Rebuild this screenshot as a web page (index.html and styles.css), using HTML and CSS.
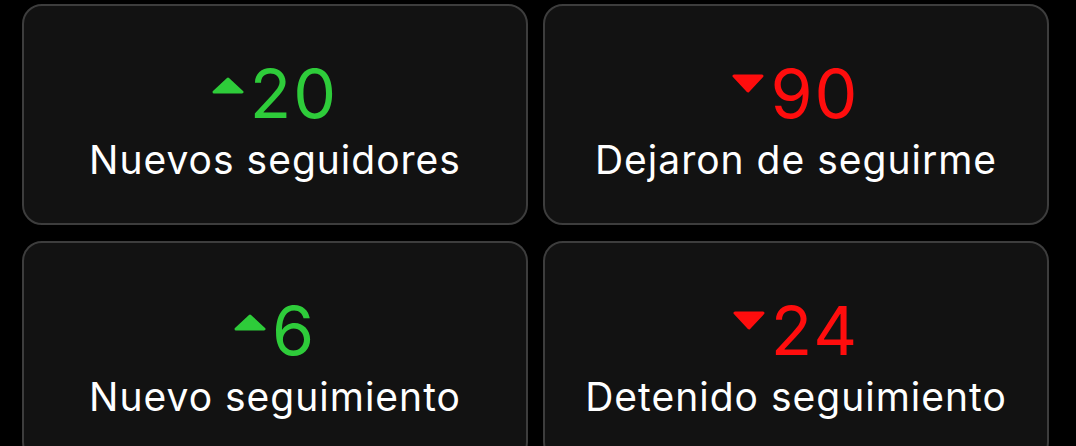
FILE: index.html
```html
<!DOCTYPE html>
<html lang="es">

<head>
    <meta charset="UTF-8">
    <title>Seguidores</title>
    <link rel="stylesheet" href="styles.css">
</head>

<body>

    <div class="stats">
        <div class="card">
            <div class="value up">
                <svg class="arrow" viewBox="0 0 32 17"><polygon points="2,15 16,2 30,15" /></svg>
                <span>20</span>
            </div>
            <div class="label">Nuevos seguidores</div>
        </div>

        <div class="card">
            <div class="value down">
                <svg class="arrow" viewBox="0 0 32 19"><polygon points="2,2 30,2 16,17" /></svg>
                <span>90</span>
            </div>
            <div class="label">Dejaron de seguirme</div>
        </div>

        <div class="card">
            <div class="value up">
                <svg class="arrow" viewBox="0 0 32 17"><polygon points="2,15 16,2 30,15" /></svg>
                <span>6</span>
            </div>
            <div class="label">Nuevo seguimiento</div>
        </div>

        <div class="card">
            <div class="value down">
                <svg class="arrow" viewBox="0 0 32 19"><polygon points="2,2 30,2 16,17" /></svg>
                <span>24</span>
            </div>
            <div class="label">Detenido seguimiento</div>
        </div>
    </div>

</body>

</html>
```

FILE: styles.css
```css
* {
    box-sizing: border-box;
}

body {
    font-family: 'Inter', 'Open Sans', sans-serif;
    background: #000;
    margin: 0;
    padding: 4px 0 0 22px;
    color: #fff;
}

.stats {
    display: grid;
    grid-template-columns: 506px 506px;
    grid-auto-rows: 221px;
    column-gap: 15px;
    row-gap: 16px;
}

.card {
    display: flex;
    flex-direction: column;
    align-items: center;
    justify-content: center;
    background: #121212;
    border: 2px solid #3d3d3d;
    border-radius: 20px;
    padding-top: 13px;
}

.value {
    display: flex;
    align-items: center;
    font-size: 68px;
    line-height: 1;
    letter-spacing: 2px;
}

.value span {
    margin-left: 6px;
}

.arrow {
    width: 32px;
    margin-bottom: 16px;
}

.arrow polygon {
    fill: currentColor;
    stroke: currentColor;
    stroke-width: 3;
    stroke-linejoin: round;
}

.up {
    color: #2ecc3a;
}

.down {
    color: #ff0d0d;
}

.up .arrow {
    height: 17px;
}

.down .arrow {
    height: 19px;
    margin-bottom: 20px;
}

.label {
    font-size: 39px;
    letter-spacing: 1px;
    margin-top: 9px;
}
```
